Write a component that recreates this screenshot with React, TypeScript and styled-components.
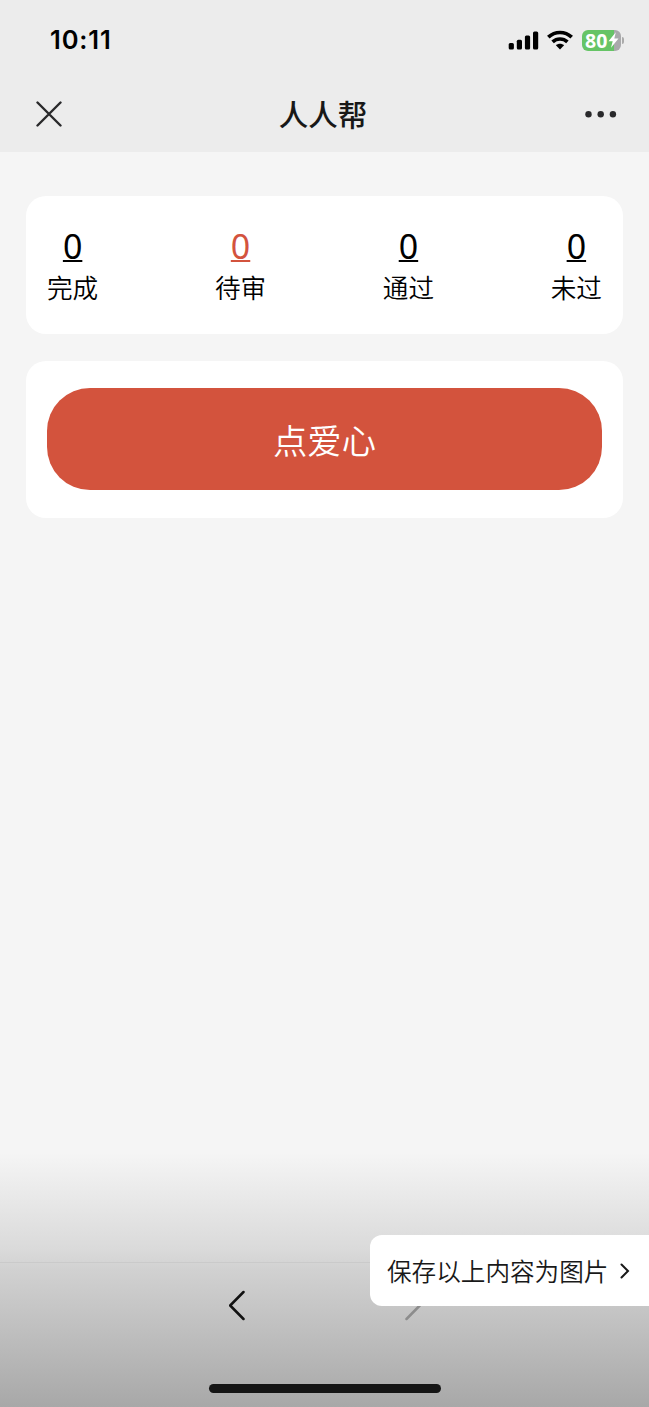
import React from 'react';
import styled, { createGlobalStyle } from 'styled-components';

const GlobalStyle = createGlobalStyle`
  * { box-sizing: border-box; }
  body {
    margin: 0;
    background: #f5f5f5;
    color: #000;
    font-family: "Noto Sans CJK SC", sans-serif;
  }
  svg { display: block; flex-shrink: 0; }
`;

const Screen = styled.div`
  position: relative;
  display: flex;
  flex-direction: column;
  width: 100%;
  height: 1407px;
  overflow: hidden;
  background: #f5f5f5;
`;

const Header = styled.header`
  height: 152px;
  background: #ececec;
`;

const StatusBar = styled.div`
  display: flex;
  align-items: center;
  justify-content: space-between;
  height: 80px;
  padding: 0 28px 0 50px;
`;

const Clock = styled.time`
  font: 600 25.5px/30px Inter, sans-serif;
  letter-spacing: 0.85px;
`;

const StatusIcons = styled.div`
  display: flex;
  align-items: center;
  gap: 8px;
`;

const Battery = styled.div`
  position: relative;
  display: flex;
  align-items: center;
  gap: 1px;
  width: 39px;
  height: 21px;
  margin-left: 1px;
  padding-left: 3px;
  border-radius: 6px;
  background: linear-gradient(90deg, #66c466 0 32px, #a9a9ab 32px);
  color: #fff;
  font: 700 19.5px/21px "Open Sans", sans-serif;

  &::after {
    content: "";
    position: absolute;
    right: -3px;
    top: 7px;
    width: 2px;
    height: 7px;
    border-radius: 0 2px 2px 0;
    background: #aaa;
  }
`;

const NavBar = styled.div`
  display: grid;
  grid-template-columns: 100px 1fr 100px;
  align-items: center;
  height: 68px;
`;

const IconButton = styled.button<{ $align?: string }>`
  display: flex;
  justify-content: ${(p) => p.$align ?? 'flex-start'};
  padding: 0 32px 0 36px;
  border: 0;
  background: none;
`;

const Title = styled.h1`
  margin: 0;
  padding: 0 3px 2px 0;
  color: #181818;
  font-size: 29.5px;
  font-weight: 500;
  line-height: 40px;
  text-align: center;
`;

const Content = styled.main`
  display: flex;
  flex: 1;
  flex-direction: column;
  gap: 27px;
  padding: 44px 26px 0;
`;

const Card = styled.section<{ $height: number }>`
  height: ${(p) => p.$height}px;
  padding: 27px 21px;
  border-radius: 20px;
  background: #fff;
`;

const StatRow = styled.div`
  display: flex;
  justify-content: space-between;
  margin-top: -1px;
`;

const Stat = styled.div`
  display: flex;
  flex-direction: column;
  align-items: center;
`;

const StatValue = styled.a<{ $active?: boolean }>`
  color: ${(p) => (p.$active ? '#d3533d' : '#000')};
  font: 400 34px/48px "Noto Sans", sans-serif;
  text-decoration: underline;
  text-decoration-thickness: 2px;
  text-underline-offset: 1px;
  text-decoration-skip-ink: none;
`;

const StatLabel = styled.span`
  font-size: 25.6px;
  font-weight: 350;
  line-height: 34px;
`;

const ActionButton = styled.button`
  display: block;
  width: 100%;
  height: 102px;
  padding: 0;
  border: 0;
  border-radius: 43px;
  background: #d3533d;
  color: #fff;
  font: 350 34.3px/48px "Noto Sans CJK SC", sans-serif;
`;

const BottomShade = styled.footer`
  display: flex;
  flex-direction: column;
  justify-content: flex-end;
  height: 254px;
  background: linear-gradient(#f5f5f5, #dadada 38%, #d1d1d1 46%, #a8a8a8);
`;

const Toolbar = styled.div`
  display: flex;
  justify-content: center;
  gap: 160px;
  height: 122px;
  padding: 5px 0 0;
  border-top: 1px solid #cacaca;
`;

const HomeIndicator = styled.div`
  width: 232px;
  height: 9px;
  margin: 0 auto 14px;
  border-radius: 5px;
  background: #151515;
`;

const SaveTip = styled.button`
  position: absolute;
  right: 0;
  top: 1235px;
  display: flex;
  align-items: center;
  gap: 12px;
  width: 279px;
  height: 71px;
  padding: 0 0 0 17px;
  border: 0;
  border-radius: 12px 0 0 12px;
  background: #fff;
  color: #191919;
  font: 350 24.6px/36px "Noto Sans CJK SC", sans-serif;
  white-space: nowrap;
`;

const TipText = styled.span`
  padding-bottom: 2px;
`;

const stats = [
  { label: '完成', value: 0 },
  { label: '待审', value: 0, active: true },
  { label: '通过', value: 0 },
  { label: '未过', value: 0 },
];

const SignalIcon = () => (
  <svg width="31" height="20" viewBox="0 0 31 20">
    <rect x="0.7" y="13" width="5.2" height="6.5" rx="1.5" />
    <rect x="8.8" y="9.7" width="5.2" height="9.8" rx="1.5" />
    <rect x="16.9" y="5.6" width="5.2" height="13.9" rx="1.5" />
    <rect x="25" y="1.4" width="5.2" height="18.1" rx="1.5" />
  </svg>
);

const WifiIcon = () => (
  <svg width="26" height="20" viewBox="0 0 26 20">
    <g fill="none" stroke="#000" strokeWidth="3.7">
      <path d="M1.3 7.2C8 .9 18 .9 24.7 7.2" />
      <path d="M5.6 11.9c4.3-3.9 10.5-3.9 14.8 0" />
    </g>
    <path d="M8.9 15.2c2.4-2 5.8-2 8.2 0L13 19.5z" />
  </svg>
);

const BoltIcon = () => (
  <svg width="11" height="16" viewBox="0 0 11 16">
    <path d="M7.8.3.5 9.2h4.2L3 15.8l7.5-9.2H6.3z" fill="#fff" />
  </svg>
);

const CloseIcon = () => (
  <svg width="26" height="26" viewBox="0 0 26 26">
    <path d="M1.5 1.5l23 23m0-23l-23 23" fill="none" stroke="#29292b" strokeWidth="2.4" strokeLinecap="round" />
  </svg>
);

const MoreIcon = () => (
  <svg width="32" height="8" viewBox="0 0 32 8" fill="#29292b">
    <circle cx="3.5" cy="4.3" r="3.2" />
    <circle cx="15.7" cy="4.3" r="3.2" />
    <circle cx="27.9" cy="4.3" r="3.2" />
  </svg>
);

const Chevron = ({ forward }: { forward?: boolean }) => (
  <svg width="16" height="76" viewBox="0 0 16 76">
    <path
      d={forward ? 'M1.5 24l13.3 13.5L1.5 51' : 'M14.5 24L1.2 37.5 14.5 51'}
      fill="none"
      stroke={forward ? '#8c8c8c' : '#111'}
      strokeWidth="2.5"
      strokeLinecap="round"
      strokeLinejoin="round"
    />
  </svg>
);

export default function App() {
  return (
    <Screen>
      <GlobalStyle />
      <Header>
        <StatusBar>
          <Clock>10:11</Clock>
          <StatusIcons>
            <SignalIcon />
            <WifiIcon />
            <Battery>80<BoltIcon /></Battery>
          </StatusIcons>
        </StatusBar>
        <NavBar>
          <IconButton aria-label="关闭"><CloseIcon /></IconButton>
          <Title>人人帮</Title>
          <IconButton aria-label="更多" $align="flex-end"><MoreIcon /></IconButton>
        </NavBar>
      </Header>
      <Content>
        <Card $height={138}>
          <StatRow>
            {stats.map((s) => (
              <Stat key={s.label}>
                <StatValue $active={s.active}>{s.value}</StatValue>
                <StatLabel>{s.label}</StatLabel>
              </Stat>
            ))}
          </StatRow>
        </Card>
        <Card $height={157}>
          <ActionButton>点爱心</ActionButton>
        </Card>
      </Content>
      <BottomShade>
        <Toolbar>
          <Chevron />
          <Chevron forward />
        </Toolbar>
        <HomeIndicator />
      </BottomShade>
      <SaveTip>
        <TipText>保存以上内容为图片</TipText>
        <svg width="10" height="16" viewBox="0 0 10 16">
          <path d="M1.5 1.5L8 8l-6.5 6.5" fill="none" stroke="#191919" strokeWidth="2" strokeLinecap="round" />
        </svg>
      </SaveTip>
    </Screen>
  );
}
